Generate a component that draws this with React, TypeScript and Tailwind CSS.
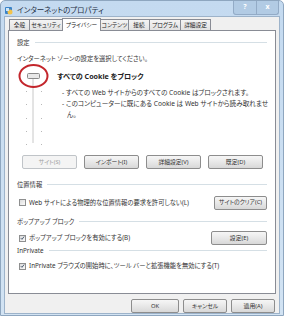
import React from "react";

const tabs = ["全般", "セキュリティ", "プライバシー", "コンテンツ", "接続", "プログラム", "詳細設定"];
const tabWidths = [21, 34, 39, 29, 22, 32, 31];

function Btn({ label, w, disabled }: { label: string; w: string; disabled?: boolean }) {
  return (
    <div
      className={`${w} h-[14px] flex items-center justify-center whitespace-nowrap rounded-[2px] border text-[5.8px] ${
        disabled
          ? "border-[#c0c4c8] bg-[#f4f4f4] text-[#a0a0a0]"
          : "border-[#8d8d8d] bg-gradient-to-b from-[#f6f6f6] via-[#e8e8e8] to-[#d8d8d8] text-[#333]"
      }`}
    >
      {label}
    </div>
  );
}

function Check({ checked, label }: { checked?: boolean; label: string }) {
  return (
    <div className="flex items-center gap-[3px] whitespace-nowrap text-[6.3px] text-[#333]">
      <div className="w-[7px] h-[7px] border border-[#8e8f8f] bg-gradient-to-br from-[#dcdcdc] to-[#fafafa] flex items-center justify-center">
        {checked && (
          <svg width="6" height="6" viewBox="0 0 6 6">
            <path d="M1 3.2 L2.4 4.6 L5 1.2" stroke="#3c4f66" strokeWidth="1.1" fill="none" />
          </svg>
        )}
      </div>
      <span>{label}</span>
    </div>
  );
}

function Group({ title }: { title: string }) {
  return (
    <div className="flex items-center gap-[5px] whitespace-nowrap text-[6.3px] text-[#333]">
      <span>{title}</span>
      <div className="flex-1 h-px bg-[#d5dfe5]" />
    </div>
  );
}

export default function App() {
  return (
    <div className="w-[285px] h-[320px] bg-white font-['Noto_Sans','Noto_Sans_CJK_JP',sans-serif] [font-feature-settings:'palt']">
      <div className="w-[284px] h-[316px] flex flex-col bg-gradient-to-b from-[#c4daf0] to-[#d2e3f3] border border-[#8ea6bf] rounded-t-[5px]">
        {/* title bar */}
        <div className="h-[19px] flex items-start">
          <div className="flex items-center gap-[4px] pl-[3px] pt-[4px] flex-1">
            <svg width="9" height="9" viewBox="0 0 9 9">
              <rect x="1" y="1" width="7" height="7" fill="#3a83c9" rx="1" />
              <circle cx="6" cy="6" r="2.5" fill="#f3c34a" />
              <rect x="2" y="2" width="3" height="3" fill="#cfe6f7" />
            </svg>
            <span className="text-[7.5px] text-[#1e2f44] whitespace-nowrap">インターネットのプロパティ</span>
          </div>
          <div className="flex h-[14px] mr-[4px] rounded-b-[3px] bg-[#b2cbe4] border-x border-b border-[#93abc6]">
            <div className="w-[22px] flex items-center justify-center text-[7px] font-bold text-white">?</div>
            <div className="w-[22px] flex items-center justify-center text-[7px] font-bold text-white border-l border-[#93abc6]">x</div>
          </div>
        </div>
        {/* client */}
        <div className="flex-1 mx-[3px] mb-[3px] bg-[#f0f0f0] border border-[#9db3ca] flex flex-col px-[3px] pt-[1px]">
          <div className="flex items-end h-[12px] pl-[1px]">
            {tabs.map((t, i) =>
              i === 2 ? (
                <div
                  key={t}
                  style={{ width: tabWidths[i] }}
                  className="h-[13px] -mb-px -ml-px z-10 bg-white border border-b-0 border-[#898c95] flex items-center justify-center whitespace-nowrap text-[5.7px] text-[#222]"
                >
                  {t}
                </div>
              ) : (
                <div
                  key={t}
                  style={{ width: tabWidths[i] }}
                  className="h-[11px] bg-gradient-to-b from-[#f4f4f4] to-[#e2e2e2] border border-b-0 border-[#898c95] -ml-px first:ml-0 flex items-center justify-center whitespace-nowrap text-[5.7px] text-[#222]"
                >
                  {t}
                </div>
              )
            )}
          </div>
          <div className="h-[264px] w-[268px] bg-white border border-[#898c95] flex flex-col px-[8px] pt-[7px]">
            <Group title="設定" />
            <div className="mt-[6px] text-[6.3px] text-[#333] whitespace-nowrap">インターネット ゾーンの設定を選択してください。</div>
            <div className="flex h-[82px]">
              <div className="w-[34px]">
                <svg width="34" height="82" viewBox="0 0 34 82">
                  <line x1="16" y1="10" x2="16" y2="80" stroke="#c8c8c8" strokeWidth="1" />
                  {[28, 41, 55, 68, 81].map((y) => (
                    <g key={y}>
                      <rect x="9" y={y} width="1" height="1" fill="#b8b8b8" />
                      <rect x="24" y={y} width="1" height="1" fill="#b8b8b8" />
                    </g>
                  ))}
                  <rect x="10.5" y="10.5" width="12" height="5" rx="1" fill="#e8e8e8" stroke="#8a8a8a" />
                  <ellipse cx="16.5" cy="13" rx="14" ry="11" fill="none" stroke="#c3262c" strokeWidth="2" />
                </svg>
              </div>
              <div className="flex flex-col pl-[6px] pt-[8px] whitespace-nowrap">
                <div className="text-[7.1px] font-bold text-[#222] leading-[10px]">すべての Cookie をブロック</div>
                <div className="mt-[6px] pl-[5px] text-[6.6px] leading-[11px] text-[#333]">
                  <div>- すべての Web サイトからのすべての Cookie はブロックされます。</div>
                  <div>- このコンピューターに既にある Cookie は Web サイトから読み取れませ</div>
                  <div className="pl-[5px]">ん。</div>
                </div>
              </div>
            </div>
            <div className="flex mt-[10px] pl-[5px] gap-[7px]">
              <Btn label="サイト(S)" w="w-[55px]" disabled />
              <Btn label="インポート(I)" w="w-[55px]" />
              <Btn label="詳細設定(V)" w="w-[55px]" />
              <Btn label="既定(D)" w="w-[55px]" />
            </div>
            <div className="mt-[11px]">
              <Group title="位置情報" />
            </div>
            <div className="flex items-center justify-between mt-[6px]">
              <div className="pl-[2px]">
                <Check label="Web サイトによる物理的な位置情報の要求を許可しない(L)" />
              </div>
              <Btn label="サイトのクリア(C)" w="w-[53px]" />
            </div>
            <div className="mt-[7px]">
              <Group title="ポップアップ ブロック" />
            </div>
            <div className="flex items-center justify-between mt-[5px]">
              <div className="pl-[2px]">
                <Check checked label="ポップアップ ブロックを有効にする(B)" />
              </div>
              <Btn label="設定(E)" w="w-[56px]" />
            </div>
            <div className="mt-[1px]">
              <Group title="InPrivate" />
            </div>
            <div className="mt-[6px] pl-[2px]">
              <Check checked label="InPrivate ブラウズの開始時に、ツール バーと拡張機能を無効にする(T)" />
            </div>
          </div>
          <div className="flex justify-end gap-[4px] mt-[5px] pr-[1px]">
            <Btn label="OK" w="w-[48px]" />
            <Btn label="キャンセル" w="w-[44px]" />
            <Btn label="適用(A)" w="w-[44px]" />
          </div>
        </div>
      </div>
    </div>
  );
}
